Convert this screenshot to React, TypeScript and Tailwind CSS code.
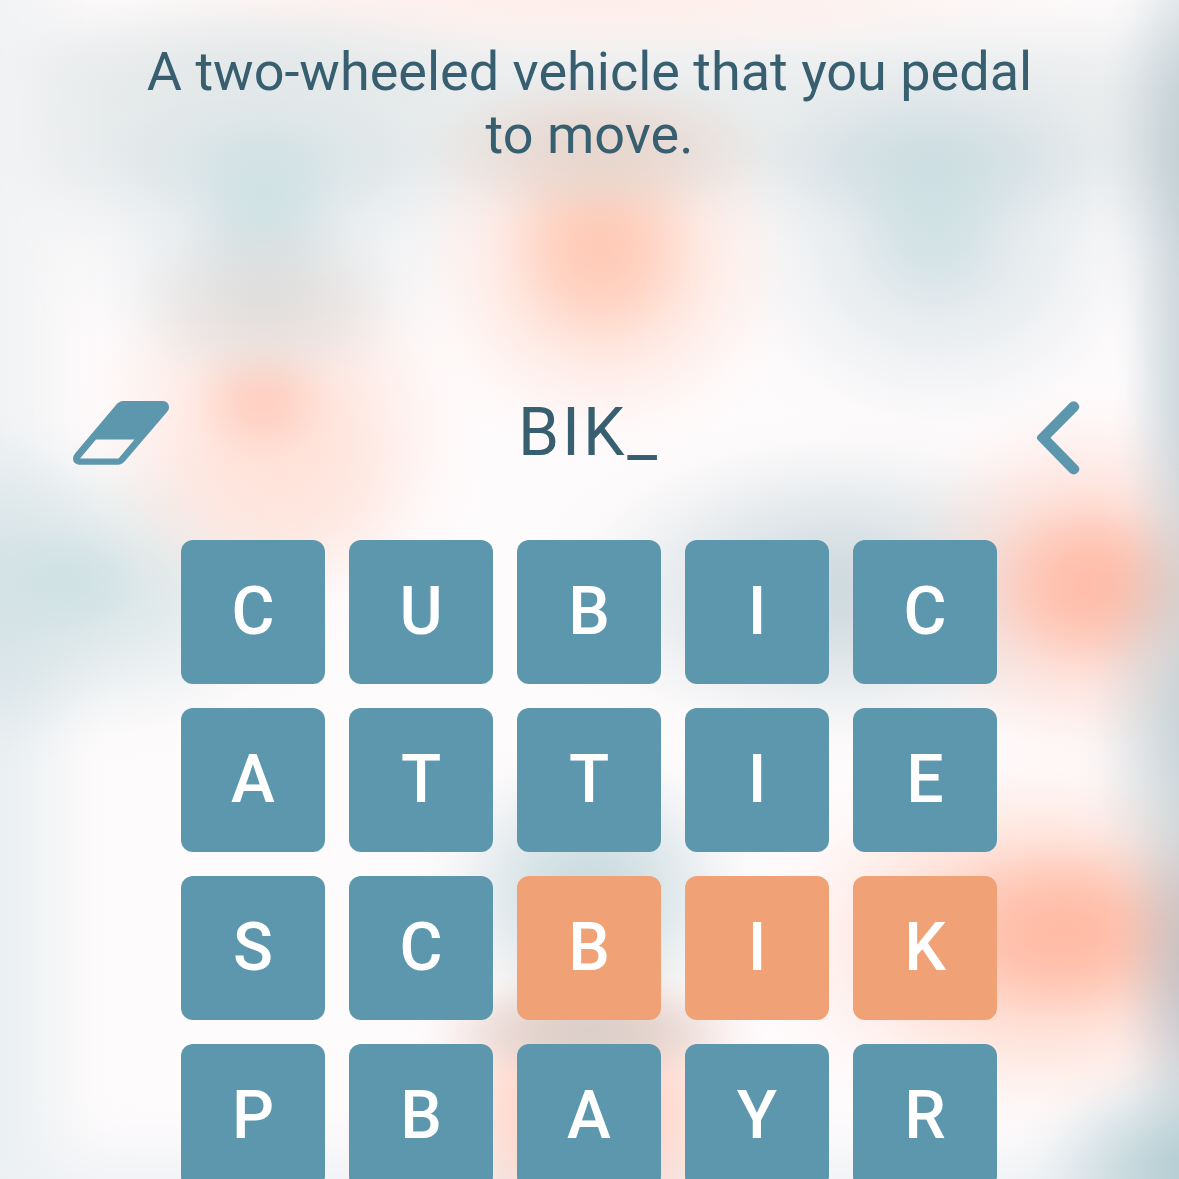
type Blob = { x: number; y: number; rx: number; ry: number; color: string; o: number };

const blobs: Blob[] = [
  { x: 600, y: -15, rx: 560, ry: 85, color: '#ffe9e2', o: 0.8 },
  // blue-green spots
  { x: 260, y: 60, rx: 300, ry: 80, color: '#dfe3e3', o: 0.5 },
  { x: 264, y: 210, rx: 250, ry: 220, color: '#dde6e9', o: 0.8 },
  { x: 264, y: 160, rx: 180, ry: 80, color: '#cddfe1', o: 0.5 },
  { x: 264, y: 220, rx: 90, ry: 110, color: '#c8dfe2', o: 0.65 },
  { x: 940, y: 235, rx: 240, ry: 225, color: '#d9e3e7', o: 0.9 },
  { x: 930, y: 160, rx: 190, ry: 85, color: '#c8dadf', o: 0.65 },
  { x: 932, y: 215, rx: 90, ry: 110, color: '#c9e0e2', o: 0.6 },
  { x: -10, y: 590, rx: 150, ry: 190, color: '#cbdce2', o: 0.75 },
  { x: 90, y: 590, rx: 260, ry: 170, color: '#d3e2e4', o: 0.85 },
  { x: 65, y: 580, rx: 90, ry: 60, color: '#c8dfe3', o: 0.5 },
  { x: 840, y: 590, rx: 310, ry: 175, color: '#cdd9dd', o: 0.95 },
  { x: 590, y: 890, rx: 180, ry: 160, color: '#c8dade', o: 0.95 },
  // peach spots
  { x: 275, y: 430, rx: 210, ry: 210, color: '#ffdfd5', o: 0.95 },
  { x: 285, y: 490, rx: 150, ry: 110, color: '#ffe3da', o: 0.6 },
  { x: 262, y: 400, rx: 80, ry: 70, color: '#ffc4b3', o: 0.6 },
  { x: 265, y: 300, rx: 160, ry: 105, color: '#dcdcdb', o: 0.75 },
  { x: 602, y: 260, rx: 205, ry: 200, color: '#ffdacd', o: 0.98 },
  { x: 600, y: 240, rx: 110, ry: 125, color: '#ffc2aa', o: 0.65 },
  { x: 598, y: 150, rx: 200, ry: 85, color: '#e4d6ce', o: 0.85 },
  { x: 1085, y: 585, rx: 200, ry: 200, color: '#ffd1c4', o: 0.98 },
  { x: 1095, y: 585, rx: 130, ry: 100, color: '#ffb39d', o: 0.7 },
  { x: 1040, y: 940, rx: 300, ry: 200, color: '#ffcebd', o: 0.98 },
  { x: 1070, y: 930, rx: 180, ry: 105, color: '#ffb39c', o: 0.75 },
  { x: 590, y: 1110, rx: 190, ry: 180, color: '#ffc4b1', o: 0.9 },
  { x: 590, y: 1030, rx: 180, ry: 60, color: '#d8cdc8', o: 0.9 },
  // shaded right edge
  { x: 1205, y: 170, rx: 110, ry: 330, color: '#aec1c8', o: 0.75 },
  { x: 1200, y: 430, rx: 90, ry: 260, color: '#b8c8ce', o: 0.7 },
  { x: 1205, y: 730, rx: 130, ry: 280, color: '#b2c4c9', o: 0.75 },
  { x: 1205, y: 990, rx: 100, ry: 220, color: '#a9b3be', o: 0.7 },
  { x: 1200, y: 1170, rx: 190, ry: 130, color: '#adc9cf', o: 0.9 },
];

function Backdrop() {
  return (
    <svg className="absolute inset-0 size-full" viewBox="0 0 1179 1179" aria-hidden="true">
      <defs>
        <filter id="haze" x="-50%" y="-50%" width="200%" height="200%">
          <feGaussianBlur stdDeviation="32" />
        </filter>
        {blobs.map((b, i) => (
          <radialGradient key={i} id={`spot-${i}`}>
            <stop offset="0" stopColor={b.color} stopOpacity={b.o} />
            <stop offset="0.15" stopColor={b.color} stopOpacity={b.o * 0.93} />
            <stop offset="0.3" stopColor={b.color} stopOpacity={b.o * 0.79} />
            <stop offset="0.5" stopColor={b.color} stopOpacity={b.o * 0.52} />
            <stop offset="0.7" stopColor={b.color} stopOpacity={b.o * 0.24} />
            <stop offset="0.85" stopColor={b.color} stopOpacity={b.o * 0.07} />
            <stop offset="1" stopColor={b.color} stopOpacity="0" />
          </radialGradient>
        ))}
      </defs>
      <rect x="-100" y="40" width="1400" height="160" fill="#e9eced" filter="url(#haze)" />
      <rect x="-100" y="-100" width="150" height="600" fill="#f1f3f4" filter="url(#haze)" />
      <rect x="-100" y="650" width="155" height="650" fill="#ebf0f2" filter="url(#haze)" />
      <rect x="-100" y="1160" width="1400" height="120" fill="#edf1f4" filter="url(#haze)" />
      {blobs.map((b, i) => (
        <ellipse key={i} cx={b.x} cy={b.y} rx={b.rx} ry={b.ry} fill={`url(#spot-${i})`} />
      ))}
    </svg>
  );
}

const rows = ['CUBIC', 'ATTIE', 'SCBIK', 'PBAYR'];
const selected = new Set(['2-2', '2-3', '2-4']);

export default function App() {
  return (
    <main className="relative h-[1179px] w-[1179px] overflow-hidden bg-[#fefbfc] font-['Roboto',sans-serif] text-[#375f70]">
      <Backdrop />
      <div className="relative flex flex-col">
        <p className="mx-auto mt-[40px] h-[128px] w-[920px] text-center text-[54px] leading-[63.3px]">
          A two-wheeled vehicle that you pedal to move.
        </p>
        <div className="mt-[224px] grid h-[84px] grid-cols-[1fr_auto_1fr] items-start pr-[99px] pl-[73px]">
          <button aria-label="Clear" className="mt-[9px] justify-self-start">
            <svg width="96" height="64" viewBox="0 0 96 64" className="block">
              <path
                fillRule="evenodd"
                fill="#5d97ae"
                d="M50 0H90Q96 .5 96 6.500Q96 9 94 11L52 60Q49 63.700 45 63.700H6Q0 63 0 57.500Q0 55 2 52.500L43 4Q46 .3 50 0ZM23 38.500L7 57.500H45.500L61.500 38.500Z"
              />
            </svg>
          </button>
          <span className="mt-[2px] ml-[25px] text-[66px] leading-[77px] tracking-[2.9px]">BIK_</span>
          <button aria-label="Back" className="mt-[9px] justify-self-end">
            <svg width="44" height="74" viewBox="0 0 44 74" className="block">
              <path
                fill="#5d97ae"
                d="M34 1.800Q38 -1.500 41.500 2Q45 5.500 42 9L14.500 36.800L42 65Q45 68.500 41.500 71.800Q38 75 34 72L1.800 39Q-.2 36.800 1.800 34.500Z"
              />
            </svg>
          </button>
        </div>
        <div className="mt-[64px] ml-[181px] grid w-[816px] grid-cols-5 gap-6">
          {rows.flatMap((row, r) =>
            [...row].map((letter, c) => (
              <button
                key={`${r}-${c}`}
                className={`flex h-[144px] w-[144px] items-center justify-center rounded-[12px] text-[66px] leading-none font-medium text-white ${
                  selected.has(`${r}-${c}`) ? 'bg-[#f0a175]' : 'bg-[#5d97ae]'
                }`}
              >
                {letter}
              </button>
            )),
          )}
        </div>
      </div>
    </main>
  );
}
